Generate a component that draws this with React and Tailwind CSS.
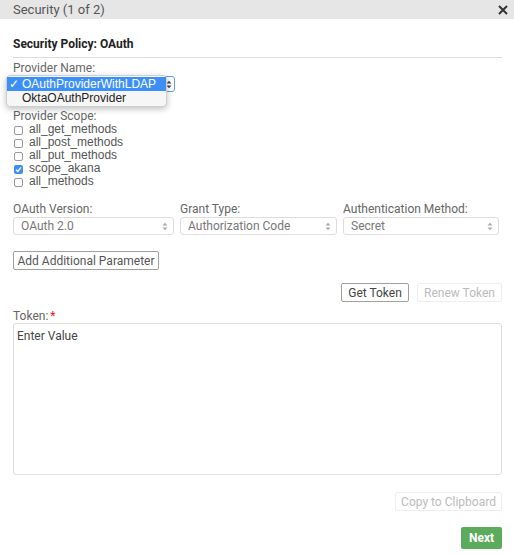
import React from 'react';

const Arrows = ({ color = '#999' }) => (
  <svg width="6" height="9" viewBox="0 0 6 9" className="shrink-0">
    <path d="M0.5 3.5 L3 0.8 L5.5 3.5 Z" fill={color} />
    <path d="M0.5 5.5 L3 8.2 L5.5 5.5 Z" fill={color} />
  </svg>
);

const Select = ({ label, value }) => (
  <div className="flex flex-col">
    <div className="text-[12px] leading-[13px] text-[#666]">{label}</div>
    <div className="mt-[1px] h-[18px] border border-[#ddd] rounded-[3px] bg-white flex items-center justify-between pl-[7px] pr-[5px] text-[12px] text-[#777]">
      <span>{value}</span>
      <Arrows color="#aaa" />
    </div>
  </div>
);

const Check = ({ checked }) => (
  checked ? (
    <span className="w-[9px] h-[9px] rounded-[2px] bg-[#3d8ef5] flex items-center justify-center mt-[3px]">
      <svg width="7" height="7" viewBox="0 0 7 7">
        <path d="M1 3.8 L2.8 5.5 L6 1.3" stroke="white" strokeWidth="1.3" fill="none" />
      </svg>
    </span>
  ) : (
    <span className="w-[9px] h-[9px] rounded-[2px] border border-[#999] bg-white mt-[3px]" />
  )
);

const scopes = [
  { name: 'all_get_methods', checked: false },
  { name: 'all_post_methods', checked: false },
  { name: 'all_put_methods', checked: false },
  { name: 'scope_akana', checked: true },
  { name: 'all_methods', checked: false },
];

export default function App() {
  return (
    <div className="w-[514px] h-[556px] bg-white overflow-hidden" style={{ fontFamily: 'Roboto, "Liberation Sans", sans-serif' }}>
      {/* Header */}
      <div className="h-[19px] bg-[#e6e6e6] flex items-center justify-between pl-[13px] pr-[6px]">
        <span className="text-[13px] text-[#555]">Security (1 of 2)</span>
        <svg width="10" height="10" viewBox="0 0 10 10">
          <path d="M1 1 L9 9 M9 1 L1 9" stroke="#333" strokeWidth="2" />
        </svg>
      </div>

      <div className="pl-[13px] pr-[12px]">
        <div className="mt-[17px] pb-[5px] border-b border-[#ddd] text-[12px] leading-[16px] font-bold text-[#222]">
          Security Policy: OAuth
        </div>

        {/* Provider name */}
        <div className="mt-[4px] text-[12px] leading-[13px] text-[#666]">Provider Name:</div>
        <div className="relative mt-[1px] w-[162px] h-[16px] border border-[#5b9df0] rounded-[3px] bg-white flex items-center justify-end pr-[2px]">
          <Arrows color="#444" />
          <div
            className="absolute left-[-8px] top-[-2px] w-[161px] h-[32px] bg-[#f6f6f6] border border-[#cfcfcf] rounded-[4px] shadow-[0_2px_6px_rgba(0,0,0,0.25)] py-[1px]"
            style={{ fontFamily: '"Liberation Sans", Arial, sans-serif' }}
          >
            <div className="h-[14px] bg-[#3b8ff6] text-white text-[12px] leading-[14px] flex items-center">
              <span className="w-[15px] pl-[2px] text-[12px]">✓</span>
              <span>OAuthProviderWithLDAP</span>
            </div>
            <div className="h-[14px] text-[#222] text-[12px] leading-[14px] flex items-center">
              <span className="w-[15px]" />
              <span>OktaOAuthProvider</span>
            </div>
          </div>
        </div>

        {/* Provider scope */}
        <div className="mt-[18px] text-[12px] leading-[13px] text-[#666]">Provider Scope:</div>
        <div className="flex flex-col">
          {scopes.map((s) => (
            <div key={s.name} className="h-[13px] flex items-start gap-[6px] pl-[1px]" style={{ fontFamily: '"Liberation Sans", Arial, sans-serif' }}>
              <Check checked={s.checked} />
              <span className="text-[12px] leading-[13px] text-[#555]">{s.name}</span>
            </div>
          ))}
        </div>

        {/* Selects */}
        <div className="mt-[15px] grid grid-cols-[161px_157px_156px] gap-[6px]">
          <Select label="OAuth Version:" value="OAuth 2.0" />
          <Select label="Grant Type:" value="Authorization Code" />
          <Select label="Authentication Method:" value="Secret" />
        </div>

        <button className="mt-[16px] h-[19px] w-[146px] border border-[#a0a0a0] rounded-[2px] bg-white text-[12px] text-[#555] flex items-center justify-center">
          Add Additional Parameter
        </button>

        <div className="mt-[13px] flex justify-end gap-[8px]">
          <button className="h-[19px] w-[68px] border border-[#a0a0a0] rounded-[2px] bg-white text-[12px] text-[#444] flex items-center justify-center">
            Get Token
          </button>
          <button className="h-[19px] w-[85px] border border-[#eee] rounded-[2px] bg-white text-[12px] text-[#bbb] flex items-center justify-center">
            Renew Token
          </button>
        </div>

        <div className="mt-[8px] text-[12px] leading-[13px] text-[#666]">
          Token:<span className="text-[#e02020] ml-[2px]">*</span>
        </div>
        <div className="h-[152px] border border-[#ddd] rounded-[3px] px-[3px] pt-[3px] text-[12px] text-[#444]">
          Enter Value
        </div>

        <div className="mt-[17px] flex justify-end">
          <button className="h-[19px] w-[107px] border border-[#eee] rounded-[2px] bg-white text-[12px] text-[#bbb] flex items-center justify-center">
            Copy to Clipboard
          </button>
        </div>

        <div className="mt-[16px] flex justify-end">
          <button className="h-[22px] w-[41px] rounded-[2px] bg-[#5cab5c] text-[12px] font-bold text-white flex items-center justify-center">
            Next
          </button>
        </div>
      </div>
    </div>
  );
}
